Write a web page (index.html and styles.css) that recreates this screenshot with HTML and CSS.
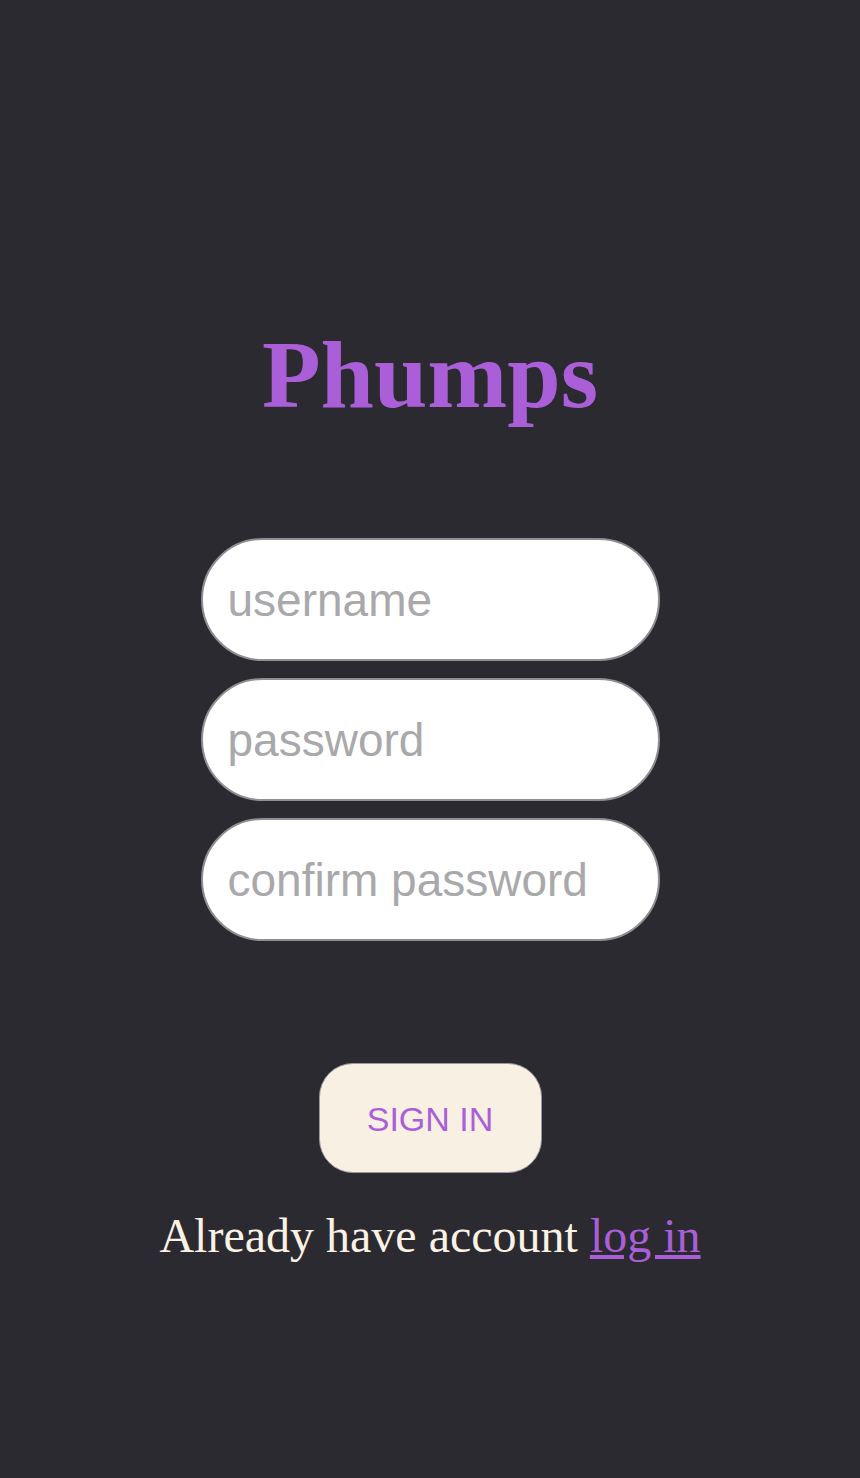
FILE: index.html
```html
<!DOCTYPE html>
<html lang="en">
<head>
<meta charset="utf-8">
<title>Phumps</title>
<link rel="stylesheet" href="styles.css">
</head>
<body>
<main class="page">
  <h1 class="brand">Phumps</h1>
  <form class="fields">
    <input class="field" type="text" placeholder="username">
    <input class="field" type="password" placeholder="password">
    <input class="field" type="password" placeholder="confirm password">
  </form>
  <button class="submit" type="button">SIGN IN</button>
  <p class="switch">Already have account <a href="#">log in</a></p>
</main>
</body>
</html>
```
FILE: styles.css
```css
html, body {
  margin: 0;
  padding: 0;
}
body {
  background: #2c2a31;
  min-height: 1478px;
}
.page {
  display: flex;
  flex-direction: column;
  align-items: center;
  padding-top: 320px;
}
.brand {
  margin: 0;
  font: 700 96px/110px "Liberation Serif", "Times New Roman", serif;
  color: #aa5fd8;
}
.fields {
  margin-top: 108px;
  display: flex;
  flex-direction: column;
  gap: 17px;
}
.field {
  box-sizing: border-box;
  width: 459px;
  height: 123px;
  border-radius: 62px;
  border: 2px solid #8f8e95;
  background: #ffffff;
  padding: 0 24px 0 25px;
  font: 46px "Liberation Sans", Arial, sans-serif;
  color: #333;
  outline: none;
}
.field::placeholder {
  color: #a9a8ab;
}
.submit {
  box-sizing: border-box;
  margin-top: 122px;
  width: 223px;
  height: 110px;
  border-radius: 34px;
  border: 1px solid #9a999f;
  background: #f8f0e3;
  color: #aa5fd8;
  font: 34px "Liberation Sans", Arial, sans-serif;
  padding: 0;
  padding-top: 2px;
}
.switch {
  margin: 35px 0 0;
  font: 48px/55px "Liberation Serif", "Times New Roman", serif;
  color: #faf2e4;
}
.switch a {
  color: #aa5fd8;
  text-decoration: underline;
}
```
